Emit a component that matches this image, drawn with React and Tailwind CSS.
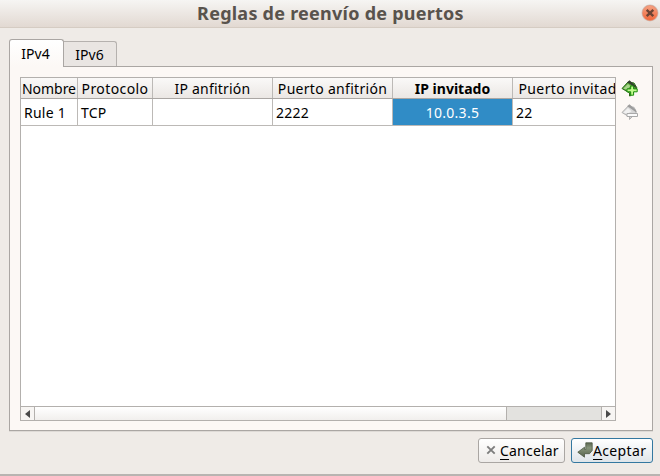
const columns = [
  { title: 'Nombre', cell: 'w-[57px]', label: '-mx-1 tracking-[-0.05px]', value: 'Rule 1' },
  { title: 'Protocolo', cell: 'w-[75px]', label: 'tracking-[0.4px]', value: 'TCP' },
  { title: 'IP anfitrión', cell: 'w-[120px]', label: 'tracking-[0.2px]', value: '' },
  { title: 'Puerto anfitrión', cell: 'w-[120px]', label: 'tracking-[0.3px]', value: '2222' },
  { title: 'IP invitado', cell: 'w-[120px]', label: 'font-bold tracking-[0px]', value: '10.0.3.5', selected: true },
  { title: 'Puerto invitado', cell: 'w-[120px]', label: 'pr-px tracking-[0.42px]', value: '22' },
];

function CloseIcon() {
  return (
    <svg width="18" height="18" viewBox="0 0 18 18">
      <defs>
        <linearGradient id="close" x1="0" y1="0" x2="0" y2="1">
          <stop offset="0" stopColor="#f5a283" />
          <stop offset="1" stopColor="#f0673a" />
        </linearGradient>
      </defs>
      <circle cx="9" cy="9" r="8.5" fill="#cfc5bd" />
      <circle cx="9" cy="9" r="7.5" fill="url(#close)" stroke="#e98768" strokeWidth=".6" />
      <path d="M5.7 5.8l6.6 6.4M12.3 5.8l-6.6 6.4" stroke="#6d4434" strokeWidth="2.4" />
    </svg>
  );
}

function AddIcon() {
  return (
    <svg width="17" height="17" viewBox="0 0 17 17">
      <path d="M1 8.5L7 2l6 1 3 5-6 7.5-1.5.5V13z" fill="#5aa53a" stroke="#2c6a1b" />
      <path d="M6 2.5L8.5.3l6.3 5.7v2L9 4z" fill="#33402f" />
      <path d="M2.3 8.5L7 4l2.5 2L6 9.8z" fill="#a9d58b" />
      <path d="M9.7 6h2.9v2.9h3.6v2.9h-3.6v3.4H9.7v-3.4H6V8.9h3.7z" fill="#c2fb8e" stroke="#188c0a" />
    </svg>
  );
}

function RemoveIcon() {
  return (
    <svg width="17" height="17" viewBox="0 0 17 17">
      <path d="M1 8.5L7 2.3l6 1 2.5 4.7-5.5 6-1.5 1.5V13z" fill="#d6d6d6" stroke="#b0b0b0" />
      <path d="M6 2.3L8.5.3l6.5 6v2L9 4z" fill="#9c9c9c" />
      <path d="M2.3 8.5L7 4l3.5 3.2L6.3 10z" fill="#f1f1f1" />
      <path d="M6 9.5h10.5v3H6z" fill="#fafafa" stroke="#a9a9a9" />
    </svg>
  );
}

function AcceptIcon() {
  return (
    <svg width="16" height="16" viewBox="0 0 16 16">
      <defs>
        <linearGradient id="ok" x1="0" y1="0" x2="0" y2="1">
          <stop offset="0" stopColor="#5d6953" />
          <stop offset=".35" stopColor="#87957b" />
          <stop offset="1" stopColor="#56634b" />
        </linearGradient>
      </defs>
      <path d="M8.8 .8h6.4v7.7L12.5 11.7H7.5v3.5L.8 10.2l6.7-5V7.5h1.3z" fill="url(#ok)" stroke="#4c5843" strokeWidth=".8" />
    </svg>
  );
}

export default function App() {
  return (
    <div className="flex h-[476px] w-[660px] flex-col overflow-hidden bg-[#efebe7] font-['Noto_Sans',sans-serif] text-[14px] leading-5 text-black">
      <header className="flex h-7 shrink-0 items-center border-b border-[#d5ccc3] bg-linear-to-b from-[#f6f5f3] to-[#e2d9d2] pr-px pb-[2px] pl-[20px]">
        <h1 className="flex-1 text-center text-[18px] font-bold tracking-[0.25px] text-[#59534d]">Reglas de reenvío de puertos</h1>
        <CloseIcon />
      </header>

      <nav className="mt-[11px] ml-[9px] flex h-[27px] shrink-0 items-end">
        <div className="z-10 -mb-px flex h-7 w-[55px] justify-center rounded-t-[3px] border border-b-0 border-[#aaa6a3] bg-linear-to-b from-white to-[#fcf8f5] pt-1 pr-[2px]">IPv4</div>
        <div className="-ml-px flex h-[25px] w-[54px] justify-center rounded-tr-[3px] border border-b-0 border-[#b5b1ae] bg-[#e9e5e2] pt-[3px] pr-px">IPv6</div>
      </nav>

      <main className="mr-[7px] ml-[9px] flex h-[365px] shrink-0 border border-[#aaa6a3] bg-[#fcf8f5] pt-[10px] pl-[10px] shadow-[0_1px_0_#dedad6]">
        <section className="flex h-[344px] w-[596px] flex-col overflow-hidden border border-[#b3b0ad] bg-white">
          <div className="flex h-[21px] shrink-0 border-b border-[#aaa6a3] bg-linear-to-b from-[#faf9f8] to-[#ebe7e4]">
            {columns.map((c) => (
              <div key={c.title} className={`${c.cell} flex shrink-0 justify-center overflow-hidden border-r border-[#bcb9b6] pt-px`}>
                <span className={`whitespace-nowrap ${c.label}`}>{c.title}</span>
              </div>
            ))}
          </div>
          <div className="flex h-[27px] shrink-0 border-b border-[#bcb9b6] tracking-[0.25px]">
            {columns.map((c) => (
              <div key={c.title} className={`${c.cell} flex shrink-0 items-center border-r border-[#bcb9b6] pt-[2px] ${c.selected ? 'justify-center bg-[#308cc6] text-white' : 'pl-[3px]'}`}>
                {c.value}
              </div>
            ))}
          </div>
          <div className="flex-1" />
          <div className="flex h-[14px] shrink-0 border-t border-[#b3b0ad] bg-[#e3e2df]">
            <div className="flex w-[14px] items-center justify-center border-r border-[#b3b0ad] bg-[#f7f5f3]">
              <svg width="5" height="8" viewBox="0 0 5 8"><path d="M5 0v8L0 4z" fill="#4a4a4a" /></svg>
            </div>
            <div className="w-[472px] border-r border-[#b3b0ad] bg-linear-to-b from-white to-[#f1efed]" />
            <div className="flex-1" />
            <div className="flex w-[14px] items-center justify-center border-l border-[#b3b0ad] bg-[#f7f5f3]">
              <svg width="5" height="8" viewBox="0 0 5 8"><path d="M0 0v8l5-4z" fill="#4a4a4a" /></svg>
            </div>
          </div>
        </section>
        <aside className="flex flex-col gap-[7px] pt-[3px] pl-[5px]">
          <AddIcon />
          <RemoveIcon />
        </aside>
      </main>

      <footer className="mt-[7px] mr-[7px] flex shrink-0 justify-end gap-[6px]">
        <button className="flex h-[25px] w-[87px] items-center rounded-[3px] border border-[#aaa6a3] bg-linear-to-b from-white to-[#eeebe9] pl-[7px]">
          <svg className="mb-px" width="10" height="10" viewBox="0 0 10 10"><path d="M1.3 1.3l7.4 7.4M8.7 1.3L1.3 8.7" stroke="#7d7d7d" strokeWidth="1.9" /></svg>
          <span className="ml-[4px] whitespace-nowrap pt-px tracking-[0.2px]"><u className="underline-offset-3">C</u>ancelar</span>
        </button>
        <button className="flex h-[25px] w-[82px] items-center rounded-[3px] border border-[#3478a0] bg-linear-to-b from-white to-[#dfe5e9] pl-[5px]">
          <span className="pb-[2px]"><AcceptIcon /></span>
          <span className="whitespace-nowrap pt-px tracking-[0.35px]"><u className="underline-offset-3">A</u>ceptar</span>
        </button>
      </footer>
      <div className="mt-auto h-[2px] shrink-0 bg-[#b8b4b1]" />
    </div>
  );
}
